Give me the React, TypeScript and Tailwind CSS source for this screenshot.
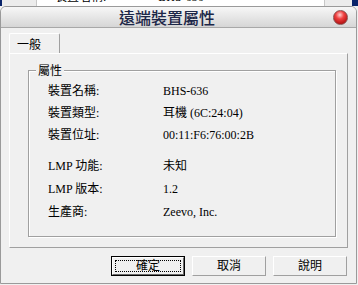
const rows1 = [
  ["裝置名稱:", "BHS-636"],
  ["裝置類型:", "耳機 (6C:24:04)"],
  ["裝置位址:", "00:11:F6:76:00:2B"],
];
const rows2 = [
  ["LMP 功能:", "未知"],
  ["LMP 版本:", "1.2"],
  ["生產商:", "Zeevo, Inc."],
];

function Btn({ label, primary }: { label: string; primary?: boolean }) {
  if (primary) {
    return (
      <div className="h-[20px] w-[74px] border border-black">
        <div className="h-full w-full border-t border-l border-white border-r border-b border-r-[#696969] border-b-[#696969] p-[2px]">
          <div className="flex h-full items-center justify-center border border-dotted border-black">
            {label}
          </div>
        </div>
      </div>
    );
  }
  return (
    <div className="flex h-[20px] w-[74px] items-center justify-center border border-t-white border-l-white border-r-[#a0a0a0] border-b-[#a0a0a0]">
      {label}
    </div>
  );
}

export default function App() {
  return (
    <div className="h-[285px] w-[358px] overflow-hidden bg-[#f0f0f0] font-['Liberation_Serif','Noto_Sans_CJK_TC',serif] text-[12px] leading-none text-black">
      {/* window behind */}
      <div className="flex h-[6px] overflow-hidden">
        <div className="w-[2px] bg-[#0a246a]" />
        <div className="w-[35px] border-r border-[#c8c8c8] bg-[#ececec]" />
        <div className="flex flex-1 bg-white">
          <span className="ml-[18px] -mt-[9px] leading-[12px]">裝置名稱:</span>
          <span className="ml-[52px] -mt-[9px] leading-[12px]">BHS-636</span>
        </div>
        <div className="w-[28px] border-l border-[#c8c8c8] bg-[#ececec]" />
        <div className="w-[6px] bg-[#0a246a]" />
      </div>

      {/* dialog */}
      <div className="flex h-[278px] w-[357px] flex-col overflow-hidden rounded-t-[6px] border border-[#9a9a9a] bg-[#f0f0f0]">
        <div className="flex h-[21px] shrink-0 items-center border-b border-[#a8a8a8] bg-gradient-to-b from-[#f7f7f7] to-[#d6d6d6]">
          <div className="flex-1 text-center font-['Noto_Sans_CJK_TC',sans-serif] text-[16px] font-medium leading-none text-[#1c2748]">
            遠端裝置屬性
          </div>
          <div className="mr-[8px] h-[15px] w-[15px] rounded-full border border-[#8a5050] bg-[radial-gradient(circle_at_45%_30%,#ffd0d0_0%,#f04040_35%,#b01010_80%)]" />
        </div>

        <div className="flex flex-1 flex-col px-[8px] pt-[5px]">
          {/* tab */}
          <div className="flex h-[20px] w-[51px] items-center rounded-t-[2px] border-t border-l border-white border-r border-r-[#a0a0a0] pl-[7px] pt-[1px] font-['Noto_Sans_CJK_TC',sans-serif]">
            一般
          </div>
          {/* panel */}
          <div className="h-[195px] w-[339px] border border-t-white border-l-white border-r-[#a0a0a0] border-b-[#a0a0a0] pl-[18px] pr-[11px] pt-[16px]">
            <div className="relative h-[167px] border border-[#a0a0a0] shadow-[inset_1px_1px_0_#ffffff,1px_1px_0_#ffffff]">
              <span className="absolute -top-[7px] left-[7px] bg-[#f0f0f0] px-[2px] font-['Noto_Sans_CJK_TC',sans-serif]">
                屬性
              </span>
              <div className="pt-[9px] pl-[19px]">
                {rows1.map(([k, v]) => (
                  <div key={k} className="grid h-[22px] grid-cols-[115px_1fr] items-center">
                    <span>{k}</span>
                    <span>{v}</span>
                  </div>
                ))}
                <div className="h-[8px]" />
                {rows2.map(([k, v]) => (
                  <div key={k} className="grid h-[23px] grid-cols-[115px_1fr] items-center">
                    <span>{k}</span>
                    <span>{v}</span>
                  </div>
                ))}
              </div>
            </div>
          </div>
          {/* buttons */}
          <div className="mt-[8px] flex justify-end gap-[7px] pr-[1px]">
            <Btn label="確定" primary />
            <Btn label="取消" />
            <Btn label="說明" />
          </div>
        </div>
      </div>
    </div>
  );
}
